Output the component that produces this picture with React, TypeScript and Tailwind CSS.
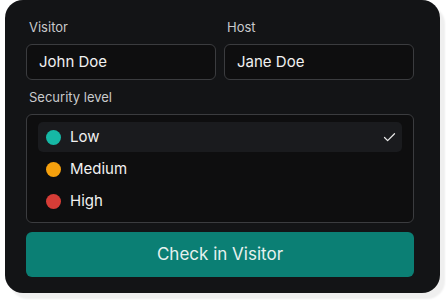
import { Check } from "lucide-react";

type Level = { label: string; color: string; selected?: boolean };

const levels: Level[] = [
  { label: "Low", color: "bg-[#16b8a5]", selected: true },
  { label: "Medium", color: "bg-[#f5a00d]" },
  { label: "High", color: "bg-[#d63d37]" },
];

function Field({ label, value }: { label: string; value: string }) {
  return (
    <div className="flex min-w-0 flex-1 flex-col">
      <span className="pl-[3px] text-[13px] leading-[18px] text-[#c9cacc]">{label}</span>
      <div className="mt-[8px] flex h-[36px] items-center rounded-[6px] border border-[#3b3c3f] bg-[#0e0e0f] px-[12px] text-[15px] text-[#f1f1f1]">
        {value}
      </div>
    </div>
  );
}

export default function App() {
  return (
    <div className="h-[305px] w-[448px] bg-white font-['Inter',sans-serif]">
      <div className="ml-[5px] flex h-[293px] w-[435px] flex-col rounded-[18px] bg-[#131416] pb-[16px] pl-[21px] pr-[26px] pt-[18px] shadow-[5px_6px_2px_0_#efefef]">
        <div className="flex gap-[8px]">
          <Field label="Visitor" value="John Doe" />
          <Field label="Host" value="Jane Doe" />
        </div>
        <span className="mt-[8px] pl-[3px] text-[13px] leading-[18px] text-[#c9cacc]">Security level</span>
        <div className="mt-[8px] flex flex-col gap-[2px] rounded-[6px] border border-[#3b3c3f] bg-[#0e0e0f] px-[11px] pb-[6px] pt-[7px]">
          {levels.map((l) => (
            <div
              key={l.label}
              className={
                l.selected
                  ? "flex h-[30px] items-center rounded-[5px] bg-[#1a1b1e] pl-[8px] pr-[5px]"
                  : "flex h-[30px] items-center rounded-[5px] pl-[8px] pr-[5px]"
              }
            >
              <span className={`h-[15px] w-[15px] shrink-0 rounded-full ${l.color}`} />
              <span className="ml-[9px] flex-1 text-[15px] text-[#f1f1f1]">{l.label}</span>
              {l.selected ? <Check size={15} strokeWidth={2} className="text-[#e8e8e8]" /> : null}
            </div>
          ))}
        </div>
        <button
          type="button"
          className="mt-[9px] h-[45px] w-full rounded-[6px] bg-[#0b7f74] text-[17px] text-[#e6f1ef]"
        >
          Check in Visitor
        </button>
      </div>
    </div>
  );
}
